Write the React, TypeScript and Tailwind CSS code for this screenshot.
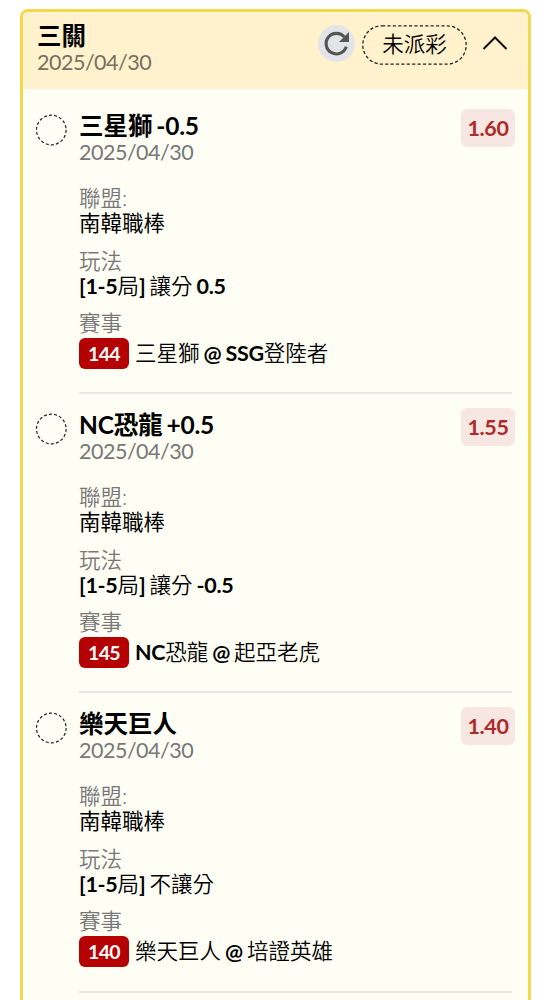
import { Fragment } from 'react';

type Leg = {
	title: string;
	date: string;
	odds: string;
	league: string;
	play: string;
	code: string;
	match: string;
};

const legs: Leg[] = [
	{
		title: '三星獅 -0.5',
		date: '2025/04/30',
		odds: '1.60',
		league: '南韓職棒',
		play: '[1-5局] 讓分 0.5',
		code: '144',
		match: '三星獅 @ SSG登陸者',
	},
	{
		title: 'NC恐龍 +0.5',
		date: '2025/04/30',
		odds: '1.55',
		league: '南韓職棒',
		play: '[1-5局] 讓分 -0.5',
		code: '145',
		match: 'NC恐龍 @ 起亞老虎',
	},
	{
		title: '樂天巨人',
		date: '2025/04/30',
		odds: '1.40',
		league: '南韓職棒',
		play: '[1-5局] 不讓分',
		code: '140',
		match: '樂天巨人 @ 培證英雄',
	},
];

// Latin runs are set heavier than the Chinese ones
function MixedText({ text }: { text: string }) {
	return (
		<>
			{text.split(/([\x20-\x7e]+)/).map((part, i) =>
				i % 2 ? (
					<span key={i} className="font-bold tracking-[-0.3px] [word-spacing:-0.9px]">
						{part}
					</span>
				) : (
					<Fragment key={i}>{part}</Fragment>
				)
			)}
		</>
	);
}

function LegItem({ leg }: { leg: Leg }) {
	return (
		<li className="flex h-[299.2px] pl-[12px] pr-[16px]">
			<svg className="mt-[19px] size-[32px] shrink-0" viewBox="0 0 32 32" fill="none">
				<circle cx="16.3" cy="16" r="14.8" stroke="#222" strokeWidth="1.2" strokeDasharray="3 2.15" />
			</svg>
			<div className="ml-[12px] flex-1 border-b-2 border-[#e9e7df] text-[21.5px] leading-[25px]">
				<div className="flex items-start justify-between pt-[14px]">
					<div className="pt-[4px]">
						<h3 className="text-[24.5px] leading-[26px] font-bold [word-spacing:-2px]">
							{leg.title.split(/([\x20-\x7e]+)/).map((part, i) => (
								<span key={i} className={i % 2 ? 'tracking-[-0.2px]' : ''}>
									{part}
								</span>
							))}
						</h3>
						<p className="leading-[26px] tracking-[-0.5px] text-[#777]">{leg.date}</p>
					</div>
					<span className="-mr-[3px] h-[38px] w-[54px] rounded-md bg-[#f7e6e1] text-center leading-[39px] font-bold tracking-[-0.4px] text-[#ac2b2b]">
						{leg.odds}
					</span>
				</div>

				<dl className="mt-[21px] font-[350]">
					<dt className="text-[#777]">聯盟:</dt>
					<dd className="font-normal">{leg.league}</dd>
					<dt className="mt-[13px] text-[#777]">玩法</dt>
					<dd>
						<MixedText text={leg.play} />
					</dd>
					<dt className="mt-[12px] text-[#777]">賽事</dt>
					<dd className="mt-[2px] flex items-center">
						<span className="mr-[6px] h-[31px] w-[50px] rounded-md bg-[#b40000] text-center text-[19.5px] leading-[31px] font-bold tracking-[-0.6px] text-white">
							{leg.code}
						</span>
						<span>
							<MixedText text={leg.match} />
						</span>
					</dd>
				</dl>
			</div>
		</li>
	);
}

export default function App() {
	return (
		<div className="h-[1000px] overflow-hidden bg-white pt-[9px] pr-[16px] pl-[20px] font-[Lato,'Noto_Sans_CJK_TC',sans-serif] text-black">
			<section className="h-[1100px] overflow-hidden rounded-lg border-3 border-[#f0d84f] bg-[#fffef5]">
				<header className="flex h-[77px] items-start bg-[#fff2cc] pl-[14px]">
					<div className="flex-1 pt-[11px]">
						<h2 className="text-[24.5px] leading-[26px] font-bold">三關</h2>
						<p className="text-[21.5px] leading-[26px] tracking-[-0.5px] text-[#777062]">2025/04/30</p>
					</div>
					<button className="mt-[13px] flex size-[37px] items-center justify-center rounded-full bg-[#e3e4e8]">
						<svg className="size-[37px]" viewBox="0 0 37 37" fill="none">
							<path d="M26.4 12.1A10.3 10.3 0 1 0 28.3 21.6" stroke="#555" strokeWidth="3.1" />
							<path d="M31 7V17H21Z" fill="#555" />
						</svg>
					</button>
					<div className="relative mt-[13px] ml-[7px] h-[40px] w-[105px] text-center text-[21.5px] leading-[39px] font-[350]">
						<svg className="absolute inset-0 size-full" viewBox="0 0 105 40" fill="none">
							<rect x="0.8" y="0.8" width="103.4" height="38.4" rx="19.2" stroke="#222" strokeWidth="1.3" strokeDasharray="3.2 2.2" />
						</svg>
						未派彩
					</div>
					<svg className="mt-[23px] mr-[20px] ml-[15px] h-[16px] w-[26px]" viewBox="0 0 26 16" fill="none">
						<path d="M1.5 14 13 2.5 24.5 14" stroke="#111" strokeWidth="2" />
					</svg>
				</header>
				<ul className="pt-[6px]">
					{legs.map((leg) => (
						<LegItem key={leg.code} leg={leg} />
					))}
				</ul>
			</section>
		</div>
	);
}
